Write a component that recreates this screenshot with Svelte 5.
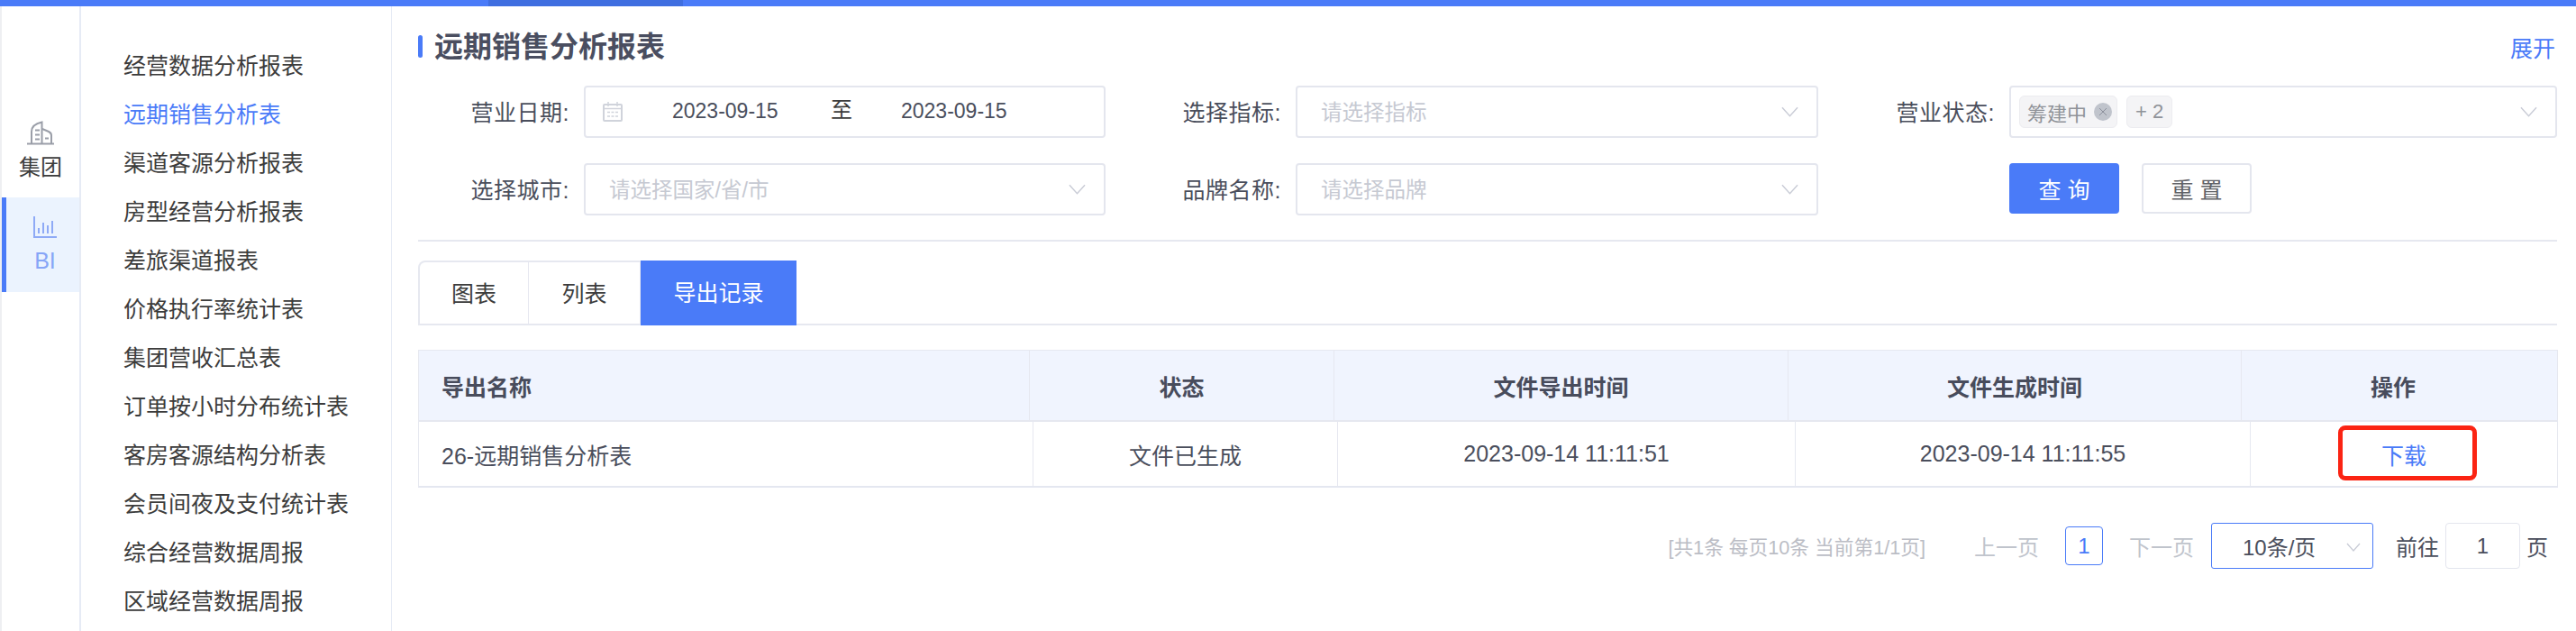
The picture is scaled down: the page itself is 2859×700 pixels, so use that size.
<script>
  const menu1 = ['经营数据分析报表','远期销售分析表','渠道客源分析报表','房型经营分析报表','差旅渠道报表','价格执行率统计表','集团营收汇总表','订单按小时分布统计表','客房客源结构分析表','会员间夜及支付统计表','综合经营数据周报','区域经营数据周报'];
</script>

<div class="page">
  <div class="topbar"><span class="topseg"></span></div>
  <div class="body">
    <aside class="rail">
      <div class="rail-item">
        <svg class="ic-building" width="30" height="27" viewBox="0 0 30 27" fill="none" stroke="#9a9ea8" stroke-width="2">
          <path d="M0 25.500h30"/><path d="M5 25V12Q5 4 16.500 1.500V25"/><path d="M17 9l7 3Q27 13.500 27 16V25"/>
          <path d="M9 10.500h5M9 15.500h5M9 20.500h5M20 19.500h4"/>
        </svg>
        <span>集团</span>
      </div>
      <div class="rail-item active">
        <svg class="ic-chart" width="28" height="26" viewBox="0 0 28 26" fill="none" stroke="#8eaaf6" stroke-width="2">
          <path d="M2 1v23h25" /><path d="M7 14v6M12 8v12M17 11v9M22 6v14"/>
        </svg>
        <span>BI</span>
      </div>
    </aside>
    <nav class="menu">
      {#each menu1 as m, i}
        <div class="menu-item" class:on={i === 1}>{m}</div>
      {/each}
    </nav>
    <main class="main">
      <div class="title-row">
        <h1 class="title">远期销售分析报表</h1>
        <span class="expand">展开</span>
      </div>
      <div class="filters">
        <div class="field f1">
          <label>营业日期:</label>
          <div class="control date">
            <svg class="ic-cal" width="22" height="22" viewBox="0 0 22 22" fill="none" stroke="#d0d3db" stroke-width="2">
              <rect x="1" y="3" width="20" height="18" rx="1"/><path d="M1 7.500h20" stroke-width="1.500"/><path d="M6 0v5M16 0v5" stroke-width="1.500"/>
              <path d="M5 11.500h3M9.500 11.500h3M14 11.500h3M5 16h3M9.500 16h3M14 16h3" stroke-width="1.500"/>
            </svg>
            <span class="d d1">2023-09-15</span><span class="to">至</span><span class="d d2">2023-09-15</span>
          </div>
        </div>
        <div class="field f2">
          <label>选择指标:</label>
          <div class="control"><span class="ph">请选择指标</span><svg class="chev" width="19" height="12" viewBox="0 0 20 12" fill="none" stroke="#c9ccd6" stroke-width="1.500"><path d="M1 1l9 10 9-10"/></svg></div>
        </div>
        <div class="field f3">
          <label>营业状态:</label>
          <div class="control tags">
            <span class="tag">筹建中<i class="close"><svg width="10" height="10" viewBox="0 0 10 10" stroke="#8c909c" stroke-width="1"><path d="M1 1l8 8M9 1l-8 8"/></svg></i></span>
            <span class="tag plus">+ 2</span>
            <svg class="chev" width="19" height="12" viewBox="0 0 20 12" fill="none" stroke="#c9ccd6" stroke-width="1.500"><path d="M1 1l9 10 9-10"/></svg>
          </div>
        </div>
        <div class="field f1">
          <label>选择城市:</label>
          <div class="control"><span class="ph">请选择国家/省/市</span><svg class="chev" width="19" height="12" viewBox="0 0 20 12" fill="none" stroke="#c9ccd6" stroke-width="1.500"><path d="M1 1l9 10 9-10"/></svg></div>
        </div>
        <div class="field f2">
          <label>品牌名称:</label>
          <div class="control"><span class="ph">请选择品牌</span><svg class="chev" width="19" height="12" viewBox="0 0 20 12" fill="none" stroke="#c9ccd6" stroke-width="1.500"><path d="M1 1l9 10 9-10"/></svg></div>
        </div>
        <div class="field f3 btns">
          <button class="btn primary">查 询</button>
          <button class="btn">重 置</button>
        </div>
      </div>
      <div class="tabs">
        <div class="tab t1">图表</div>
        <div class="tab t2">列表</div>
        <div class="tab t3 on">导出记录</div>
      </div>
      <div class="table">
        <div class="thead">
          <div class="c left">导出名称</div><div class="c">状态</div><div class="c">文件导出时间</div><div class="c">文件生成时间</div><div class="c ophead">操作</div>
        </div>
        <div class="tbody">
          <div class="c left">26-远期销售分析表</div><div class="c">文件已生成</div><div class="c">2023-09-14 11:11:51</div><div class="c">2023-09-14 11:11:55</div>
          <div class="c op"><span class="link">下载</span><span class="mark"></span></div>
        </div>
      </div>
      <div class="pager">
        <span class="total">[共1条 每页10条 当前第1/1页]</span>
        <span class="pg prev">上一页</span>
        <span class="num">1</span>
        <span class="pg next">下一页</span>
        <span class="size">10条/页<svg width="16" height="10" viewBox="0 0 16 10" fill="none" stroke="#c9ccd6" stroke-width="1.300"><path d="M1 1l7 8 7-8"/></svg></span>
        <span class="go">前往</span>
        <span class="goin">1</span>
        <span class="go">页</span>
      </div>
    </main>
  </div>
</div>

<style>
  :global(body) { margin: 0; background: #fff; }
  .page { width: 2859px; height: 700px; overflow: hidden; font-family: "Liberation Sans", "Noto Sans CJK SC", sans-serif; font-size: 25px; color: #4a4e5c; box-sizing: border-box; }
  .topbar { height: 7px; background: #4a7bf8; position: relative; }
  .topseg { position: absolute; left: 542px; width: 216px; top: 0; bottom: 0; background: #3f6ee0; }
  .body { display: flex; height: 693px; }
  .rail { width: 86px; margin-left: 2px; border-right: 2px solid #e6ebf5; box-shadow: -2px 0 0 #eeeff2; padding-top: 127px; flex: none; }
  .rail-item { height: 105px; display: flex; flex-direction: column; align-items: center; color: #3c3c3c; font-size: 24px; line-height: 28px; }
  .rail-item .ic-building { margin-bottom: 11px; }
  .rail-item.active { background: #ebf3fe; color: #86a5f7; border-left: 5px solid #4a7bf8; box-sizing: border-box; margin-top: -20px; padding-top: 20px; padding-left: 5px; font-size: 25px; }
  .rail-item.active .ic-chart { margin-bottom: 10px; }
  .menu { width: 344px; flex: none; border-right: 1px solid #e6ebf5; padding-top: 39px; }
  .menu-item { height: 54px; line-height: 54px; padding-left: 47px; color: #3c3c3c; font-size: 25px; white-space: nowrap; }
  .menu-item.on { color: #4a7bf8; }
  .main { flex: 1; padding: 0 21px 0 29px; min-width: 0; }
  .title-row { display: flex; justify-content: space-between; align-items: center; height: 60px; margin-top: 15px; position: relative; padding-left: 18px; margin-bottom: 13px; }
  .title-row::before { content: ""; position: absolute; left: 0; top: 17px; width: 5px; height: 25px; border-radius: 3px; background: #4a7bf8; }
  .title { margin: 0; font-size: 32px; font-weight: 700; color: #4a4e60; line-height: 60px; }
  .expand { color: #4a7bf8; font-size: 25px; margin-right: 2px; }
  .filters { display: grid; grid-template-columns: 763px 791px 1fr; grid-auto-rows: 58px; row-gap: 28px; height: 171px; border-bottom: 2px solid #e6e8f0; }
  .field { display: flex; align-items: center; position: relative; }
  .field label { width: 184px; flex: none; text-align: right; padding-right: 16px; padding-bottom: 2px; box-sizing: border-box; white-space: nowrap; color: #4a4e5c; letter-spacing: .5px; }
  .f1 .control { width: 579px; }
  .f2 label { width: 211px; }
  .f2 .control { width: 580px; }
  .f3 label { width: 212px; }
  .control { height: 58px; box-sizing: border-box; border: 2px solid #e4e6ee; border-radius: 4px; display: flex; align-items: center; padding-left: 26px; position: relative; background: #fff; flex: none; }
  .f3 .control { flex: 1; padding-left: 9px; gap: 10px; }
  .ph { color: #c6c9d2; font-size: 23.500px; padding-bottom: 2px; }
  .chev { position: absolute; right: 20px; top: 21px; }
  .date { padding-left: 19px; }
  .d { font-size: 23px; position: absolute; top: 11px; line-height: 30px; color: #4a4e5c; }
  .d1 { left: 96px; } .d2 { left: 350px; }
  .to { position: absolute; left: 272px; top: 10px; line-height: 30px; font-size: 24px; color: #3c3c3c; }
  .tag { display: inline-flex; align-items: center; height: 36px; box-sizing: border-box; border: 1px solid #ececf0; border-radius: 6px; background: #f4f4f6; color: #909399; font-size: 22px; padding: 0 5px 0 8px; gap: 8px; white-space: nowrap; }
  .tag.plus { padding: 0 9px; }
  .close { width: 20px; height: 20px; border-radius: 50%; background: #c0c4cc; display: inline-flex; align-items: center; justify-content: center; }
  .close svg { display: block; }
  .btns { padding-left: 212px; gap: 25px; align-items: flex-start; }
  .btn { width: 122px; height: 56px; box-sizing: border-box; border: 2px solid #e4e6ee; border-radius: 4px; background: #fff; color: #606266; font: inherit; font-size: 25px; padding: 0; }
  .btn.primary { background: #4a7bf8; border-color: #4a7bf8; color: #fff; }
  .tabs { display: flex; height: 72px; margin-top: 21px; border-bottom: 2px solid #e6e8f0; box-sizing: border-box; }
  .tab { display: flex; align-items: center; justify-content: center; border-top: 2px solid #e6e8f0; border-right: 1px solid #e6e8f0; color: #3c3c3c; font-size: 25px; height: 72px; box-sizing: border-box; padding-bottom: 4px; }
  .t1 { width: 123px; border-left: 2px solid #e6e8f0; border-top-left-radius: 8px; }
  .t2 { width: 124px; }
  .t3 { width: 173px; background: #4a7bf8; color: #fff; border: 0; }
  .table { margin-top: 27px; margin-right: -1px; border-left: 1px solid #e6e8f0; border-right: 1px solid #e6e8f0; border-bottom: 2px solid #e4e7f0; }
  .thead, .tbody { display: grid; }
  .thead { grid-template-columns: 678px 338px 504px 503px 1fr; height: 80px; background: #f0f4fe; border-top: 1px solid #e6e8f0; border-bottom: 2px solid #e6e8f0; box-sizing: border-box; font-weight: 700; color: #484c5c; font-size: 25px; }
  .tbody { grid-template-columns: 682px 338px 508px 505px 1fr; height: 71px; color: #4a4e5c; }
  .c { display: flex; align-items: center; justify-content: center; border-right: 1px solid #e6e8f0; white-space: nowrap; }
  .c:last-child { border-right: 0; }
  .c.left { justify-content: flex-start; padding-left: 25px; }
  .ophead { padding-right: 14px; }
  .op { position: relative; }
  .link { color: #4a7bf8; }
  .mark { position: absolute; left: 97px; top: 4px; width: 154px; height: 61px; box-sizing: border-box; border: 5px solid #fb2413; border-radius: 8px; }
  .pager { display: flex; align-items: center; height: 51px; margin-top: 39px; justify-content: flex-end; position: relative; margin-right: 10px; }
  .total { color: #bbbdc5; font-size: 21.700px; margin-right: 54px; }
  .pg { color: #c0c4cc; font-size: 24px; }
  .num { width: 42px; height: 43px; box-sizing: border-box; border: 1px solid #4a7bf8; border-radius: 4px; color: #4a7bf8; display: flex; align-items: center; justify-content: center; margin: 0 29px; font-size: 24px; }
  .size { width: 180px; height: 51px; box-sizing: border-box; border: 1px solid #4a7bf8; border-radius: 3px; display: flex; align-items: center; padding-left: 34px; color: #4a4e5c; font-size: 24px; margin-left: 19px; margin-right: 25px; position: relative; }
  .size svg { position: absolute; right: 13px; top: 21px; }
  .go { font-size: 24px; color: #4a4e5c; }
  .goin { width: 83px; height: 51px; box-sizing: border-box; border: 1px solid #e4e6ee; border-radius: 4px; display: flex; align-items: center; justify-content: center; margin: 0 7px; font-size: 24px; }
</style>
